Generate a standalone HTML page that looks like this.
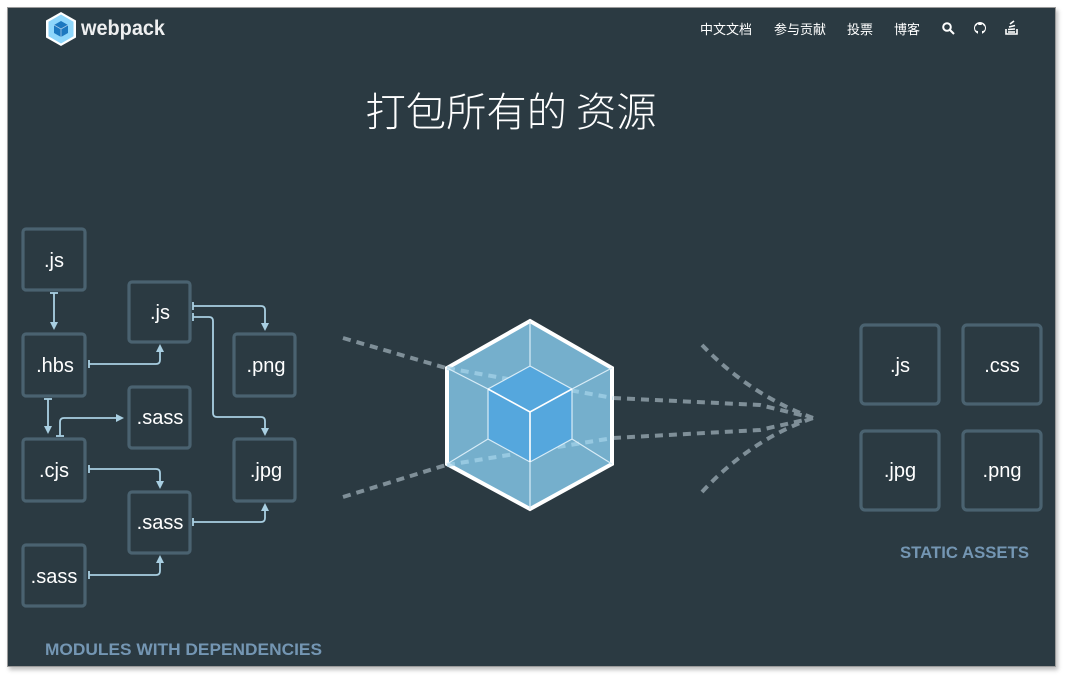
<!DOCTYPE html>
<html><head><meta charset="utf-8"><style>
html,body{margin:0;padding:0;background:#fff;}
body{width:1067px;height:679px;position:relative;overflow:hidden;font-family:"Liberation Sans","Noto Sans CJK SC",sans-serif;}
#frame{position:absolute;left:7px;top:7px;width:1047px;height:658px;border:1px solid #9a9a9a;background:#2b3a42;box-shadow:2px 3px 4px rgba(0,0,0,.25);}
</style></head><body>
<div id="frame"></div>
<svg width="1067" height="679" style="position:absolute;left:0;top:0" font-family="Liberation Sans, Noto Sans CJK SC, sans-serif">
<g transform="translate(61,29)">
<polygon points="0,-17 15,-8.5 15,8.5 0,17 -15,8.5 -15,-8.5" fill="#fff"/>
<polygon points="0,-14.5 12.5,-7.2 12.5,7.2 0,14.5 -12.5,7.2 -12.5,-7.2" fill="#8ed6fb"/>
<polygon points="0,-8 7,-4 7,4 0,8 -7,4 -7,-4" fill="#1c78c0"/>
<path d="M-7,-4 L0,0 L7,-4 M0,0 L0,8" stroke="#fff" stroke-width="0.8" fill="none" opacity=".6"/>
</g>
<text x="81" y="35" fill="#fff" font-size="21" font-weight="bold" fill-opacity=".92" textLength="84" lengthAdjust="spacingAndGlyphs">webpack</text>
<g fill="#fff" font-size="13">
<text x="700" y="34">中文文档</text>
<text x="774" y="34">参与贡献</text>
<text x="847" y="34">投票</text>
<text x="894" y="34">博客</text>
</g>
<g stroke="#fff" stroke-width="2" fill="none">
<circle cx="947" cy="27" r="3.8"/><line x1="950" y1="30" x2="954" y2="34"/>
</g>
<circle cx="980" cy="28" r="6" fill="#fff"/>
<path d="M978,34 v-3 q-3,0 -3,-3 q0,-2 2,-3 l0,-1 l2,1 h2 l2,-1 l0,1 q2,1 2,3 q0,3 -3,3 v3z" fill="#2b3a42"/>
<g stroke="#fff" stroke-width="1.6" fill="none">
<path d="M1006,29 v5 h11 v-5"/><line x1="1008" y1="32" x2="1015" y2="32"/>
<line x1="1008" y1="29.5" x2="1015" y2="29"/><line x1="1009" y1="27" x2="1015" y2="25.5"/><line x1="1010" y1="24" x2="1014" y2="21"/>
</g>
<text x="511" y="126" fill="#fff" font-size="40" text-anchor="middle" font-family="Noto Sans CJK SC, sans-serif" font-weight="300" textLength="291" lengthAdjust="spacingAndGlyphs">打包所有的 资源</text>
<g stroke="#7f8f98" stroke-width="4" stroke-dasharray="8,6" fill="none">
<path d="M343,338 L446,368"/>
<path d="M343,497 L446,465"/>
<path d="M613,398 L760,405 L813,418"/>
<path d="M613,438 L760,430 L813,418"/>
<path d="M702,345 Q750,395 813,418"/>
<path d="M702,492 Q750,440 813,418"/>
</g>
<polygon points="530,321 612,368 612,464 530,509 447,464 447,368" fill="#75afcc" stroke="#fff" stroke-width="4"/>
<g stroke="#a6d4ea" stroke-width="4" stroke-dasharray="8,6" fill="none" opacity=".7">
<path d="M447,368 L613,398"/><path d="M447,465 L613,438"/>
</g>
<polygon points="530,366 572,389 572,439 530,462 488,439 488,389" fill="#55a7dd" stroke="#d8ecf7" stroke-width="1.2"/>
<path d="M488,389 L530,412 L572,389 M530,412 L530,462" stroke="#fff" stroke-width="1.6" fill="none"/>
<path d="M530,321 L530,366 M612,368 L572,389 M612,464 L572,439 M530,509 L530,462 M447,464 L488,439 M447,368 L488,389" stroke="#d8ecf7" stroke-width="1.2" fill="none"/>
<g fill="none" stroke="#4a6270" stroke-width="3.2">
<rect x="23" y="229" width="62" height="61" rx="3"/>
<rect x="23" y="334" width="62" height="62" rx="3"/>
<rect x="23" y="439" width="62" height="62" rx="3"/>
<rect x="23" y="545" width="62" height="61" rx="3"/>
<rect x="129" y="282" width="61" height="60" rx="3"/>
<rect x="129" y="387" width="61" height="61" rx="3"/>
<rect x="129" y="492" width="61" height="61" rx="3"/>
<rect x="234" y="334" width="61" height="62" rx="3"/>
<rect x="234" y="439" width="61" height="62" rx="3"/>
<rect x="861" y="325" width="78" height="79" rx="4"/>
<rect x="963" y="325" width="78" height="79" rx="4"/>
<rect x="861" y="431" width="78" height="79" rx="4"/>
<rect x="963" y="431" width="78" height="79" rx="4"/>
</g>
<g stroke="#a9cfe2" stroke-width="1.8" fill="none">
<path d="M54,293 V328"/><path d="M50,293 h8"/>
<path d="M89,364 H156 q4,0 4,-4 V348"/><path d="M89,360 v8"/>
<path d="M48,399 V432"/><path d="M44,399 h8"/>
<path d="M60,436 V422 q0,-4 4,-4 H122"/><path d="M56,436 h8"/>
<path d="M89,469 H156 q4,0 4,4 V486"/><path d="M89,465 v8"/>
<path d="M89,575 H156 q4,0 4,-4 V559"/><path d="M89,571 v8"/>
<path d="M193,522 H261 q4,0 4,-4 V507"/><path d="M193,518 v8"/>
<path d="M193,306 H261 q4,0 4,4 V328"/><path d="M193,302 v8"/>
<path d="M193,317 H209 q4,0 4,4 V413 q0,4 4,4 H261 q4,0 4,4 V433"/><path d="M193,313 v8"/>
</g>
<g fill="#a9cfe2">
<path d="M50,322 L54,330 L58,322 Z"/>
<path d="M156,352 L160,344 L164,352 Z"/>
<path d="M44,426 L48,434 L52,426 Z"/>
<path d="M116,414 L124,418 L116,422 Z"/>
<path d="M156,481 L160,489 L164,481 Z"/>
<path d="M156,563 L160,555 L164,563 Z"/>
<path d="M261,511 L265,503 L269,511 Z"/>
<path d="M261,323 L265,331 L269,323 Z"/>
<path d="M261,428 L265,436 L269,428 Z"/>
</g>
<g fill="#fff" font-size="20" text-anchor="middle">
<text x="54" y="267">.js</text>
<text x="55" y="372">.hbs</text>
<text x="54" y="477">.cjs</text>
<text x="54" y="583">.sass</text>
<text x="160" y="319">.js</text>
<text x="160" y="424">.sass</text>
<text x="160" y="529">.sass</text>
<text x="266" y="372">.png</text>
<text x="266" y="477">.jpg</text>
<text x="900" y="372">.js</text>
<text x="1002" y="372">.css</text>
<text x="900" y="477">.jpg</text>
<text x="1002" y="477">.png</text>
</g>
<g fill="#7496b3" font-size="17" font-weight="bold">
<text x="45" y="655" textLength="277" lengthAdjust="spacingAndGlyphs">MODULES WITH DEPENDENCIES</text>
<text x="900" y="558" textLength="129" lengthAdjust="spacingAndGlyphs">STATIC ASSETS</text>
</g>
</svg>
</body></html>
